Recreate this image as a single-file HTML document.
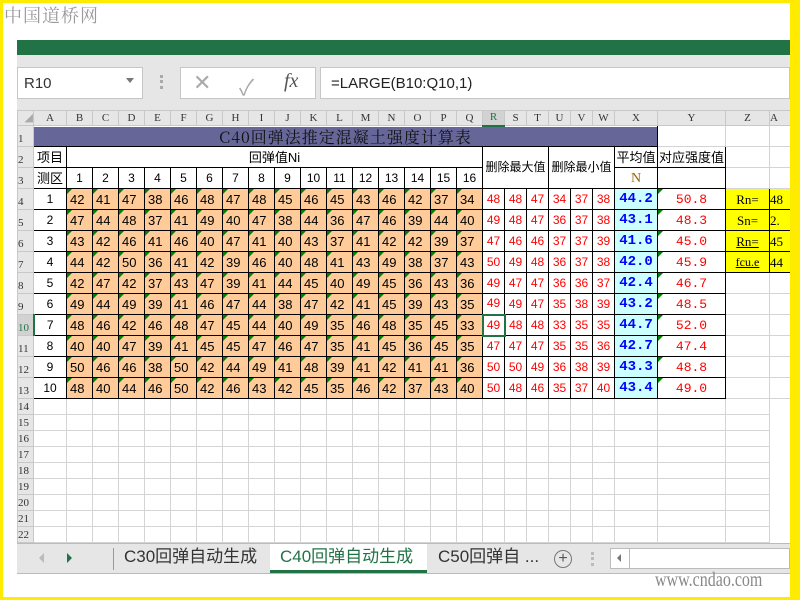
<!DOCTYPE html>
<html><head><meta charset="utf-8"><style>
*{margin:0;padding:0;box-sizing:border-box}
body{width:800px;height:600px;overflow:hidden;background:#fff;position:relative;font-family:"Liberation Sans","Noto Sans CJK SC",sans-serif}
.yb{position:absolute;background:#ffeb00}
#logo{position:absolute;left:4px;top:2px;font-family:"Noto Serif CJK SC",serif;font-size:18px;color:#999;letter-spacing:1px}
#green{position:absolute;left:17px;top:40px;width:773px;height:15px;background:#217346}
#tool{position:absolute;left:17px;top:55px;width:773px;height:55px;background:#e6e6e6}
.box{position:absolute;background:#fff;border:1px solid #c6c6c6;top:12px;height:32px}
table{position:absolute;left:17px;top:110px;border-collapse:collapse;table-layout:fixed;font-size:12px}
td{border:1px solid #d4d4d4;padding:0;text-align:center;white-space:nowrap;overflow:hidden;line-height:17px;font-family:"Liberation Sans","Noto Sans CJK SC",sans-serif}
tr.h td{background:#e6e6e6;border-color:#c8c8c8;color:#333;font-size:11px;font-family:"Liberation Serif",serif;height:15px;line-height:13px}
td.rh{background:#e6e6e6;border-color:#c8c8c8;color:#333;font-size:11px;text-align:left;vertical-align:bottom;font-family:"Liberation Serif",serif;line-height:13px}
tr.d td{height:21px}
tr.e td{height:16px;line-height:13px}
.b{border:1px solid #000}
.o{background:#ffcc99;border:1px solid #000;text-align:left;padding-left:3px;position:relative;font-size:13px}
.o::before,.t::before{content:"";position:absolute;left:0;top:0;border-top:5px solid #008000;border-right:5px solid transparent}
.r{color:#f00;border:1px solid #000;font-size:12px}
.x{background:#ccffff;color:#0000ff;font-weight:bold;border:1px solid #000;font-family:"Liberation Mono",monospace;font-size:14px}
.t{color:#f00;border:1px solid #000;position:relative;font-family:"Liberation Mono",monospace;font-size:13px}
.z{background:#ffff00;border:1px solid #000;font-family:"Liberation Serif",serif;font-size:13px}
.a{border:1px solid #000;border-bottom:1px dotted #000}
#tabs{position:absolute;left:17px;top:543px;width:773px;height:31px;background:#e6e6e6;border-top:1px solid #bbb;border-bottom:1px solid #bbb}
.tab{position:absolute;top:0;height:29px;font-size:17px;line-height:26px;color:#333;font-family:"Liberation Sans","Noto Sans CJK SC",sans-serif}
</style></head><body>
<div id="logo">中国道桥网</div>
<div id="green"></div>
<div id="tool">
 <div class="box" style="left:0;width:126px;padding:7px 6px;font-size:15px;color:#333">R10<span style="position:absolute;right:8px;top:10px;border-top:5px solid #777;border-left:4px solid transparent;border-right:4px solid transparent"></span></div>
 <div style="position:absolute;left:143px;top:20px;width:3px;height:14px;border-left:3px dotted #aaa"></div>
 <div class="box" style="left:163px;width:136px"><span style="position:absolute;left:12px;top:2px;font-size:22px;color:#aaa">✕</span><span style="position:absolute;left:58px;top:2px;font-size:22px;color:#aaa">✓</span><span style="position:absolute;left:103px;top:2px;font-size:20px;font-style:italic;font-family:'Liberation Serif',serif;color:#555">fx</span></div>
 <div class="box" style="left:303px;width:470px;padding:7px 10px;font-size:15px;color:#222">=LARGE(B10:Q10,1)</div>
</div>
<table>
<colgroup><col style="width:16px"><col style="width:33px"><col span="16" style="width:26px"><col span="6" style="width:22px"><col style="width:43px"><col style="width:68px"><col style="width:44px"><col style="width:22px"></colgroup>
<tr class="h"><td style="text-align:right;color:#aaa">◢</td><td>A</td><td>B</td><td>C</td><td>D</td><td>E</td><td>F</td><td>G</td><td>H</td><td>I</td><td>J</td><td>K</td><td>L</td><td>M</td><td>N</td><td>O</td><td>P</td><td>Q</td><td style="color:#217346;border-bottom:2px solid #217346;background:#d2d2d2">R</td><td>S</td><td>T</td><td>U</td><td>V</td><td>W</td><td>X</td><td>Y</td><td>Z</td><td style="text-align:left">A</td></tr>
<tr class="d"><td class="rh">1</td><td colspan="24" style="background:#666699;border:1px solid #000;font-family:'Noto Serif CJK SC',serif;font-size:16px;line-height:17px;color:#111;letter-spacing:1px">C40回弹法推定混凝土强度计算表</td><td></td><td></td><td></td></tr>
<tr class="d"><td class="rh">2</td><td class="a" style="font-size:13px">项目</td><td colspan="16" class="b" style="font-size:13px;border-left:1px dotted #000">回弹值Ni</td><td colspan="3" rowspan="2" class="b" style="font-size:12px;border-right:1px dotted #000">删除最大值</td><td colspan="3" rowspan="2" class="b" style="font-size:12px;border-right:1px dotted #000">删除最小值</td><td class="b" style="font-size:13px;border-bottom:1px dotted #000">平均值</td><td class="b" style="font-size:13px">对应强度值</td><td></td><td></td></tr>
<tr class="d"><td class="rh">3</td><td class="a" style="font-size:13px">测区</td><td class="b">1</td><td class="b">2</td><td class="b">3</td><td class="b">4</td><td class="b">5</td><td class="b">6</td><td class="b">7</td><td class="b">8</td><td class="b">9</td><td class="b">10</td><td class="b">11</td><td class="b">12</td><td class="b">13</td><td class="b">14</td><td class="b">15</td><td class="b">16</td><td class="b" style="color:#996600;font-family:'Liberation Serif',serif;font-size:14px">N</td><td class="b"></td><td></td><td></td></tr>
<tr class="d"><td class="rh">4</td><td class="a">1</td><td class="o">42</td><td class="o">41</td><td class="o">47</td><td class="o">38</td><td class="o">46</td><td class="o">48</td><td class="o">47</td><td class="o">48</td><td class="o">45</td><td class="o">46</td><td class="o">45</td><td class="o">43</td><td class="o">46</td><td class="o">42</td><td class="o">37</td><td class="o">34</td><td class="r">48</td><td class="r">48</td><td class="r">47</td><td class="r">34</td><td class="r">37</td><td class="r">38</td><td class="x">44.2</td><td class="t">50.8</td><td class="z">Rn=</td><td class="z" style="text-align:left">48</td></tr>
<tr class="d"><td class="rh">5</td><td class="a">2</td><td class="o">47</td><td class="o">44</td><td class="o">48</td><td class="o">37</td><td class="o">41</td><td class="o">49</td><td class="o">40</td><td class="o">47</td><td class="o">38</td><td class="o">44</td><td class="o">36</td><td class="o">47</td><td class="o">46</td><td class="o">39</td><td class="o">44</td><td class="o">40</td><td class="r">49</td><td class="r">48</td><td class="r">47</td><td class="r">36</td><td class="r">37</td><td class="r">38</td><td class="x">43.1</td><td class="t">48.3</td><td class="z">Sn=</td><td class="z" style="text-align:left">2.</td></tr>
<tr class="d"><td class="rh">6</td><td class="a">3</td><td class="o">43</td><td class="o">42</td><td class="o">46</td><td class="o">41</td><td class="o">46</td><td class="o">40</td><td class="o">47</td><td class="o">41</td><td class="o">40</td><td class="o">43</td><td class="o">37</td><td class="o">41</td><td class="o">42</td><td class="o">42</td><td class="o">39</td><td class="o">37</td><td class="r">47</td><td class="r">46</td><td class="r">46</td><td class="r">37</td><td class="r">37</td><td class="r">39</td><td class="x">41.6</td><td class="t">45.0</td><td class="z" style="text-decoration:underline">Rn=</td><td class="z" style="text-align:left">45</td></tr>
<tr class="d"><td class="rh">7</td><td class="a">4</td><td class="o">44</td><td class="o">42</td><td class="o">50</td><td class="o">36</td><td class="o">41</td><td class="o">42</td><td class="o">39</td><td class="o">46</td><td class="o">40</td><td class="o">48</td><td class="o">41</td><td class="o">43</td><td class="o">49</td><td class="o">38</td><td class="o">37</td><td class="o">43</td><td class="r">50</td><td class="r">49</td><td class="r">48</td><td class="r">36</td><td class="r">37</td><td class="r">38</td><td class="x">42.0</td><td class="t">45.9</td><td class="z" style="text-decoration:underline;font-size:12px">fcu.e</td><td class="z" style="text-align:left">44</td></tr>
<tr class="d"><td class="rh">8</td><td class="a">5</td><td class="o">42</td><td class="o">47</td><td class="o">42</td><td class="o">37</td><td class="o">43</td><td class="o">47</td><td class="o">39</td><td class="o">41</td><td class="o">44</td><td class="o">45</td><td class="o">40</td><td class="o">49</td><td class="o">45</td><td class="o">36</td><td class="o">43</td><td class="o">36</td><td class="r">49</td><td class="r">47</td><td class="r">47</td><td class="r">36</td><td class="r">36</td><td class="r">37</td><td class="x">42.4</td><td class="t">46.7</td><td style="border-left:1px solid #000"></td><td></td></tr>
<tr class="d"><td class="rh">9</td><td class="a">6</td><td class="o">49</td><td class="o">44</td><td class="o">49</td><td class="o">39</td><td class="o">41</td><td class="o">46</td><td class="o">47</td><td class="o">44</td><td class="o">38</td><td class="o">47</td><td class="o">42</td><td class="o">41</td><td class="o">45</td><td class="o">39</td><td class="o">43</td><td class="o">35</td><td class="r">49</td><td class="r">49</td><td class="r">47</td><td class="r">35</td><td class="r">38</td><td class="r">39</td><td class="x">43.2</td><td class="t">48.5</td><td style="border-left:1px solid #000"></td><td></td></tr>
<tr class="d"><td class="rh" style="color:#217346;border-right:2px solid #217346;background:#d2d2d2">10</td><td class="a">7</td><td class="o">48</td><td class="o">46</td><td class="o">42</td><td class="o">46</td><td class="o">48</td><td class="o">47</td><td class="o">45</td><td class="o">44</td><td class="o">40</td><td class="o">49</td><td class="o">35</td><td class="o">46</td><td class="o">48</td><td class="o">35</td><td class="o">45</td><td class="o">33</td><td class="r" style="border:2px solid #217346">49</td><td class="r">48</td><td class="r">48</td><td class="r">33</td><td class="r">35</td><td class="r">35</td><td class="x">44.7</td><td class="t">52.0</td><td style="border-left:1px solid #000"></td><td></td></tr>
<tr class="d"><td class="rh">11</td><td class="a">8</td><td class="o">40</td><td class="o">40</td><td class="o">47</td><td class="o">39</td><td class="o">41</td><td class="o">45</td><td class="o">45</td><td class="o">47</td><td class="o">46</td><td class="o">47</td><td class="o">35</td><td class="o">41</td><td class="o">45</td><td class="o">36</td><td class="o">45</td><td class="o">35</td><td class="r">47</td><td class="r">47</td><td class="r">47</td><td class="r">35</td><td class="r">35</td><td class="r">36</td><td class="x">42.7</td><td class="t">47.4</td><td style="border-left:1px solid #000"></td><td></td></tr>
<tr class="d"><td class="rh">12</td><td class="a">9</td><td class="o">50</td><td class="o">46</td><td class="o">46</td><td class="o">38</td><td class="o">50</td><td class="o">42</td><td class="o">44</td><td class="o">49</td><td class="o">41</td><td class="o">48</td><td class="o">39</td><td class="o">41</td><td class="o">42</td><td class="o">41</td><td class="o">41</td><td class="o">36</td><td class="r">50</td><td class="r">50</td><td class="r">49</td><td class="r">36</td><td class="r">38</td><td class="r">39</td><td class="x">43.3</td><td class="t">48.8</td><td style="border-left:1px solid #000"></td><td></td></tr>
<tr class="d"><td class="rh">13</td><td class="b">10</td><td class="o">48</td><td class="o">40</td><td class="o">44</td><td class="o">46</td><td class="o">50</td><td class="o">42</td><td class="o">46</td><td class="o">43</td><td class="o">42</td><td class="o">45</td><td class="o">35</td><td class="o">46</td><td class="o">42</td><td class="o">37</td><td class="o">43</td><td class="o">40</td><td class="r">50</td><td class="r">48</td><td class="r">46</td><td class="r">35</td><td class="r">37</td><td class="r">40</td><td class="x">43.4</td><td class="t">49.0</td><td style="border-left:1px solid #000"></td><td></td></tr>
<tr class="e"><td class="rh">14</td><td style="border-top:1px solid #000"></td><td></td><td></td><td></td><td></td><td></td><td></td><td></td><td></td><td></td><td></td><td></td><td></td><td></td><td></td><td></td><td></td><td></td><td></td><td></td><td></td><td></td><td></td><td></td><td></td><td></td></tr>
<tr class="e"><td class="rh">15</td><td></td><td></td><td></td><td></td><td></td><td></td><td></td><td></td><td></td><td></td><td></td><td></td><td></td><td></td><td></td><td></td><td></td><td></td><td></td><td></td><td></td><td></td><td></td><td></td><td></td><td></td></tr>
<tr class="e"><td class="rh">16</td><td></td><td></td><td></td><td></td><td></td><td></td><td></td><td></td><td></td><td></td><td></td><td></td><td></td><td></td><td></td><td></td><td></td><td></td><td></td><td></td><td></td><td></td><td></td><td></td><td></td><td></td></tr>
<tr class="e"><td class="rh">17</td><td></td><td></td><td></td><td></td><td></td><td></td><td></td><td></td><td></td><td></td><td></td><td></td><td></td><td></td><td></td><td></td><td></td><td></td><td></td><td></td><td></td><td></td><td></td><td></td><td></td><td></td></tr>
<tr class="e"><td class="rh">18</td><td></td><td></td><td></td><td></td><td></td><td></td><td></td><td></td><td></td><td></td><td></td><td></td><td></td><td></td><td></td><td></td><td></td><td></td><td></td><td></td><td></td><td></td><td></td><td></td><td></td><td></td></tr>
<tr class="e"><td class="rh">19</td><td></td><td></td><td></td><td></td><td></td><td></td><td></td><td></td><td></td><td></td><td></td><td></td><td></td><td></td><td></td><td></td><td></td><td></td><td></td><td></td><td></td><td></td><td></td><td></td><td></td><td></td></tr>
<tr class="e"><td class="rh">20</td><td></td><td></td><td></td><td></td><td></td><td></td><td></td><td></td><td></td><td></td><td></td><td></td><td></td><td></td><td></td><td></td><td></td><td></td><td></td><td></td><td></td><td></td><td></td><td></td><td></td><td></td></tr>
<tr class="e"><td class="rh">21</td><td></td><td></td><td></td><td></td><td></td><td></td><td></td><td></td><td></td><td></td><td></td><td></td><td></td><td></td><td></td><td></td><td></td><td></td><td></td><td></td><td></td><td></td><td></td><td></td><td></td><td></td></tr>
<tr class="e"><td class="rh">22</td><td></td><td></td><td></td><td></td><td></td><td></td><td></td><td></td><td></td><td></td><td></td><td></td><td></td><td></td><td></td><td></td><td></td><td></td><td></td><td></td><td></td><td></td><td></td><td></td><td></td><td></td></tr>
</table>
<div id="tabs">
 <span style="position:absolute;left:22px;top:9px;border-right:5px solid #bbb;border-top:5px solid transparent;border-bottom:5px solid transparent"></span>
 <span style="position:absolute;left:50px;top:9px;border-left:5px solid #217346;border-top:5px solid transparent;border-bottom:5px solid transparent"></span>
 <span style="position:absolute;left:96px;top:4px;width:1px;height:22px;background:#999"></span>
 <div class="tab" style="left:107px">C30回弹自动生成</div>
 <div class="tab" style="left:253px;width:157px;background:#fff;border-bottom:3px solid #217346;color:#217346;padding-left:10px">C40回弹自动生成</div>
 <div class="tab" style="left:421px">C50回弹自 ...</div>
 <div style="position:absolute;left:537px;top:6px;width:18px;height:18px;border:1px solid #777;border-radius:50%;text-align:center;line-height:15px;font-size:16px;color:#555">+</div>
 <span style="position:absolute;left:574px;top:8px;height:14px;border-left:3px dotted #bbb"></span>
 <div style="position:absolute;left:593px;top:4px;width:20px;height:21px;background:#fff;border:1px solid #bbb"><span style="position:absolute;left:6px;top:5px;border-right:4px solid #777;border-top:4px solid transparent;border-bottom:4px solid transparent"></span></div>
 <div style="position:absolute;left:612px;top:4px;width:161px;height:21px;background:#fff;border:1px solid #bbb"></div>
</div>
<div style="position:absolute;left:655px;top:569px;font-family:'Liberation Serif',serif;font-size:20px;color:#888;transform:scaleX(0.8);transform-origin:left">www.cndao.com</div>
<div class="yb" style="left:0;top:0;width:800px;height:3px"></div>
<div class="yb" style="left:0;top:0;width:3px;height:600px"></div>
<div class="yb" style="left:790px;top:0;width:10px;height:600px"></div>
<div class="yb" style="left:0;top:597px;width:800px;height:3px"></div>
</body></html>
